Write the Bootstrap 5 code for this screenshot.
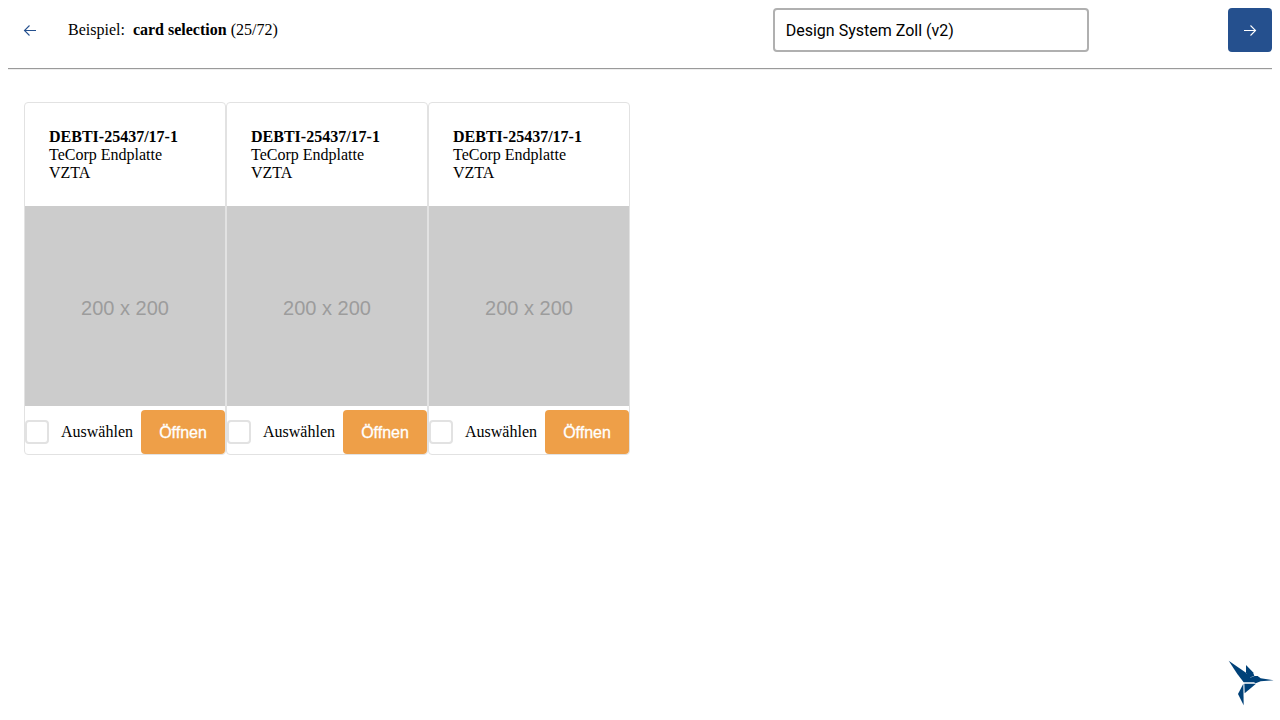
<!DOCTYPE html>
<html lang="de">
<head>
<meta charset="utf-8">
<meta name="viewport" content="width=device-width, initial-scale=1">
<title>card selection</title>
<link href="https://cdn.jsdelivr.net/npm/bootstrap@5.3.0/dist/css/bootstrap.min.css" rel="stylesheet">
<style>
  body { font: 16px/20px "Liberation Serif", serif; color: #000; background: #fff; }
  .topbar { display: grid; grid-template-columns: 1fr 25% 14.5%; }
  .icon-btn { width: 44px; height: 44px; border-radius: 4px; color: #25508e; border: 0; }
  .icon-btn.filled, .icon-btn.filled:hover { background: #25508e; color: #fff; }
  .system-select { height: 44px; padding: 2px 11px 0; border: 2px solid #b0b0b0; border-radius: 4px; font: 16px/20px Roboto, sans-serif; color: #000; background: #fff; appearance: none; }
  .divider { border-top: 1px solid #9a9a9a; border-bottom: 1px solid #eee; opacity: 1; }
  .pick-card { width: 202px; border: 1px solid #e2e2e2; border-radius: 4px; }
  .pick-head { padding: 25px 24px 24px; line-height: 18px; }
  .pick-image { height: 200px; background: #ccc; color: #9c9c9c; font: 20px/24px "Liberation Sans", sans-serif; }
  .pick-check { width: 24px; height: 24px; border: 2px solid #e2e2e2; border-radius: 4px; }
  .open-btn, .open-btn:hover { width: 84px; height: 44px; padding: 2px 0 0; border: 0; border-radius: 4px; background: #ee9f48; color: #fff; font: 16px/20px "Liberation Sans", sans-serif; -webkit-text-stroke: .3px #fff; }
  .bird { right: 4px; bottom: 12px; }
</style>
</head>
<body class="p-2">
<header class="topbar align-items-center">
  <div class="d-flex align-items-center gap-3">
    <button type="button" class="btn icon-btn p-0 d-flex align-items-center justify-content-center" aria-label="Zurück">
      <svg width="14" height="14" viewBox="0 0 14 14" fill="none" stroke="currentColor" stroke-width="1.1"><path d="M13 7.5H1.5M6.5 2.5l-5 5 5 5"/></svg>
    </button>
    <div>Beispiel:&nbsp; <strong>card selection</strong> (25/72)</div>
  </div>
  <select class="system-select w-100" aria-label="Design System"><option>Design System Zoll (v2)</option></select>
  <button type="button" class="btn icon-btn filled p-0 d-flex align-items-center justify-content-center ms-auto" aria-label="Weiter">
    <svg width="14" height="14" viewBox="0 0 14 14" fill="none" stroke="currentColor" stroke-width="1.1"><path d="M1 7.5h11.5M7.5 2.5l5 5-5 5"/></svg>
  </button>
</header>
<hr class="divider mt-3 mb-3">
<main class="d-flex flex-wrap p-3">
  <article class="pick-card">
    <div class="pick-head"><strong>DEBTI-25437/17-1</strong><br>TeCorp Endplatte<br>VZTA</div>
    <div class="pick-image d-flex align-items-center justify-content-center"><span class="pt-1">200 x 200</span></div>
    <div class="d-flex align-items-center pt-1">
      <input class="form-check-input pick-check m-0" type="checkbox" id="pick1">
      <label class="ms-auto me-2" for="pick1">Auswählen</label>
      <button type="button" class="btn open-btn">Öffnen</button>
    </div>
  </article>
  <article class="pick-card">
    <div class="pick-head"><strong>DEBTI-25437/17-1</strong><br>TeCorp Endplatte<br>VZTA</div>
    <div class="pick-image d-flex align-items-center justify-content-center"><span class="pt-1">200 x 200</span></div>
    <div class="d-flex align-items-center pt-1">
      <input class="form-check-input pick-check m-0" type="checkbox" id="pick2">
      <label class="ms-auto me-2" for="pick2">Auswählen</label>
      <button type="button" class="btn open-btn">Öffnen</button>
    </div>
  </article>
  <article class="pick-card">
    <div class="pick-head"><strong>DEBTI-25437/17-1</strong><br>TeCorp Endplatte<br>VZTA</div>
    <div class="pick-image d-flex align-items-center justify-content-center"><span class="pt-1">200 x 200</span></div>
    <div class="d-flex align-items-center pt-1">
      <input class="form-check-input pick-check m-0" type="checkbox" id="pick3">
      <label class="ms-auto me-2" for="pick3">Auswählen</label>
      <button type="button" class="btn open-btn">Öffnen</button>
    </div>
  </article>
</main>
<svg class="bird position-fixed" width="50" height="50" viewBox="18 18 150 150" fill="#004178" role="img" aria-label="Kolibri">
  <path d="M26 26 76 61 105 91 71 91 52 66Z"/>
  <path d="M78 39 99 61 103 72 86 77 78 62Z"/>
  <path d="M86 79 104 72 113 72 122 79 161 85 122 88 107 94Z"/>
  <path d="M73 95H108L74 124Z"/>
  <path d="M70 95 71 160 54 126Z"/>
</svg>
<script src="https://cdn.jsdelivr.net/npm/bootstrap@5.3.0/dist/js/bootstrap.bundle.min.js"></script>
</body>
</html>
